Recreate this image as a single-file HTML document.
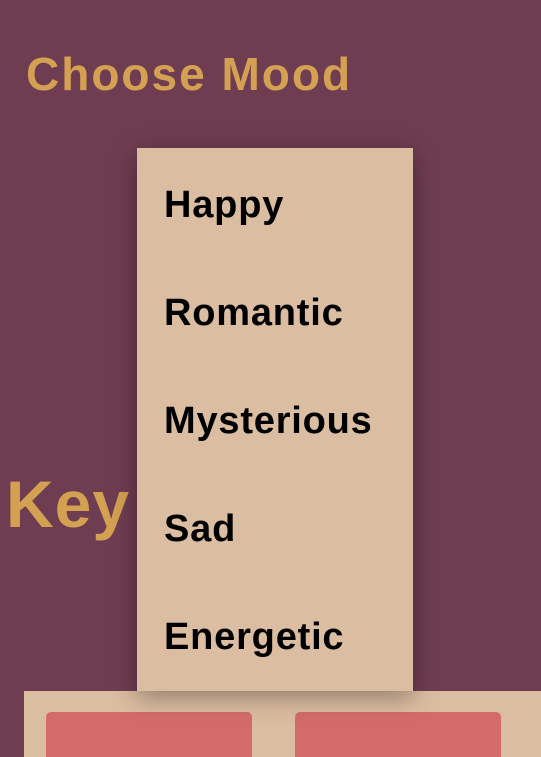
<!DOCTYPE html>
<html><head><style>
html,body{margin:0;width:541px;height:757px;overflow:hidden}
body{background:#6f3d51;font-family:"Liberation Sans",sans-serif;position:relative}
.t{position:absolute;font-weight:bold;color:#d4a052}
.menu{position:absolute;left:137px;top:148px;width:276px;height:543px;background:#dbbda1;box-shadow:0 6px 24px rgba(0,0,0,.35);z-index:2}
.menu div{position:absolute;left:27px;font-size:38px;font-weight:bold;color:#000;line-height:1;letter-spacing:0.8px}
.panel{position:absolute;left:24px;top:691px;width:530px;height:66px;background:#dbbda1}
.b{position:absolute;top:712px;width:206px;height:45px;background:#d46b6a;border-radius:5px 5px 0 0}
</style></head><body>
<div class="t" style="left:26px;top:47px;font-size:46px;letter-spacing:2px">Choose Mood</div>
<div class="t" style="left:6px;top:466px;font-size:66px;letter-spacing:1px">Key</div>
<div class="panel"></div>
<div class="b" style="left:46px"></div>
<div class="b" style="left:295px"></div>
<div class="menu">
<div style="top:38px">Happy</div>
<div style="top:146px">Romantic</div>
<div style="top:254px">Mysterious</div>
<div style="top:362px">Sad</div>
<div style="top:470px">Energetic</div>
</div>
</body></html>
